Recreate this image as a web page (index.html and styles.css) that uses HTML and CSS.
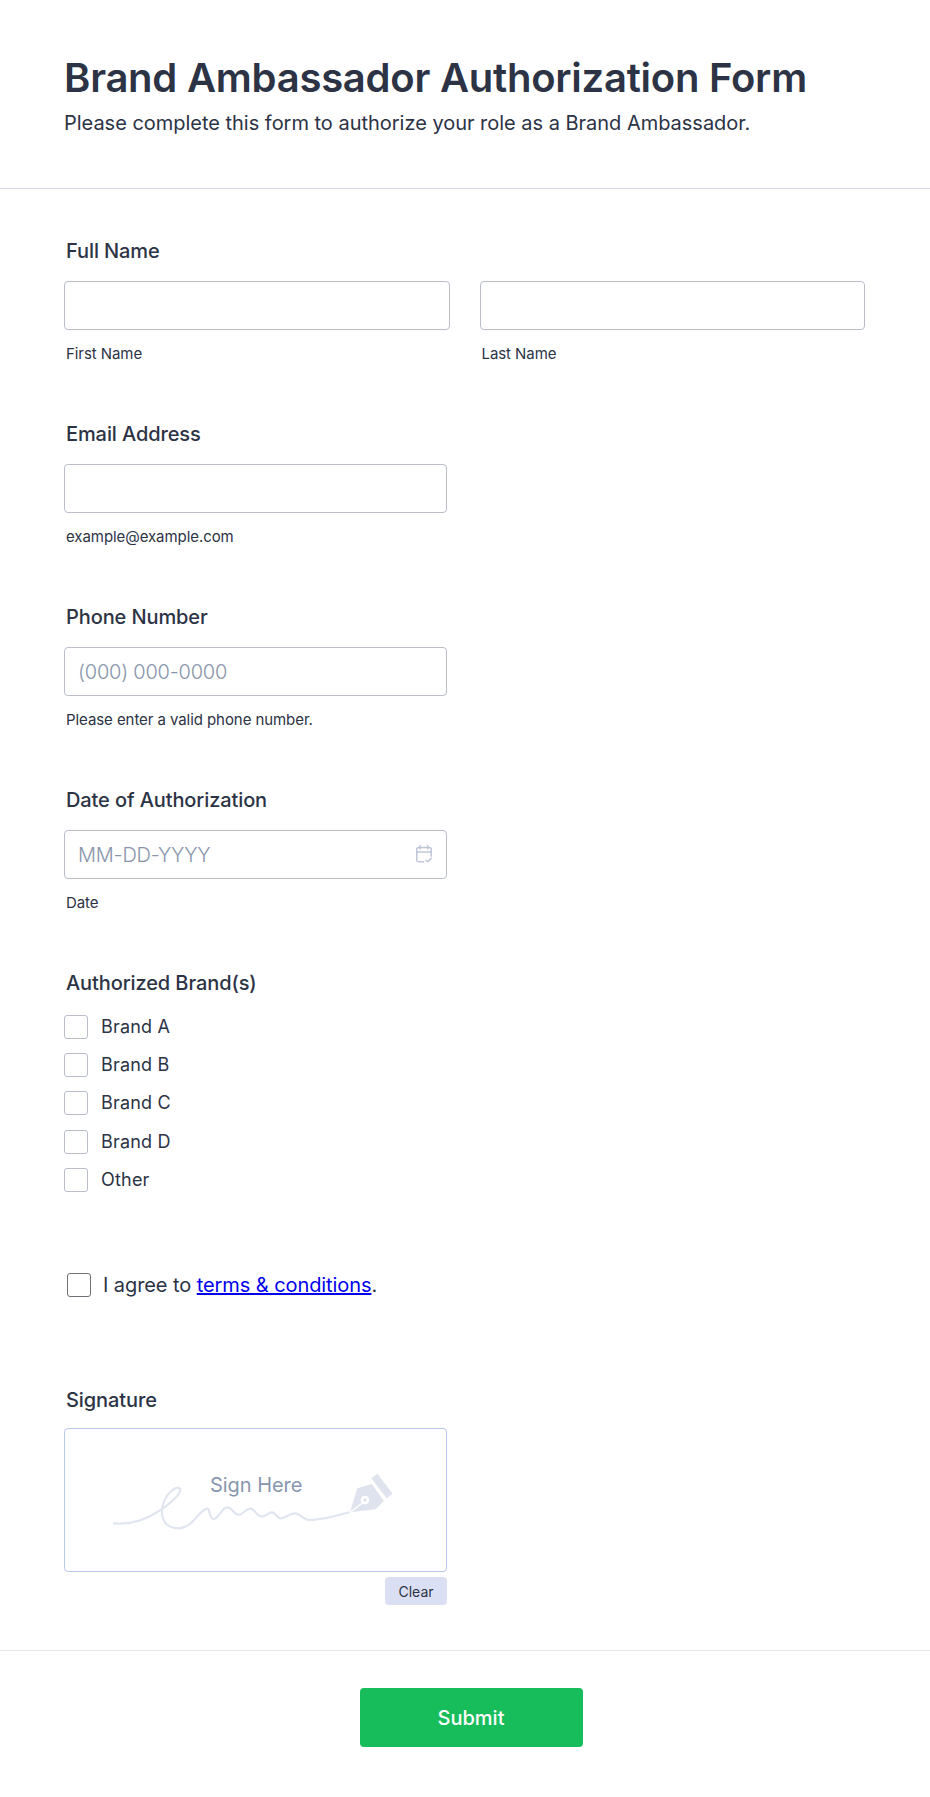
FILE: index.html
```html
<!DOCTYPE html>
<html lang="en">
<head>
<meta charset="utf-8">
<title>Brand Ambassador Authorization Form</title>
<link rel="stylesheet" href="styles.css">
</head>
<body>
<form class="form">
  <header class="form-header">
    <h1 class="title">Brand Ambassador Authorization Form</h1>
    <p class="subtitle">Please complete this form to authorize your role as a Brand Ambassador.</p>
  </header>
  <div class="form-body">
    <div class="field">
      <div class="label">Full Name</div>
      <div class="name-row">
        <div class="name-col">
          <input class="input input-wide" type="text" aria-label="First Name">
          <div class="sublabel">First Name</div>
        </div>
        <div class="name-col">
          <input class="input input-wide" type="text" aria-label="Last Name">
          <div class="sublabel">Last Name</div>
        </div>
      </div>
    </div>
    <div class="field">
      <div class="label">Email Address</div>
      <input class="input" type="text" aria-label="Email Address">
      <div class="sublabel">example@example.com</div>
    </div>
    <div class="field">
      <div class="label">Phone Number</div>
      <input class="input" type="text" placeholder="(000) 000-0000" aria-label="Phone Number">
      <div class="sublabel">Please enter a valid phone number.</div>
    </div>
    <div class="field">
      <div class="label">Date of Authorization</div>
      <div class="date-wrap">
        <input class="input" type="text" placeholder="MM-DD-YYYY" aria-label="Date">
        <svg class="cal-icon" viewBox="0 0 16 18" fill="none" stroke="#bfc6d6" stroke-width="1.5" stroke-linecap="round" stroke-linejoin="round">
          <path d="M7.5 16.8H2.6A1.8 1.8 0 0 1 .8 15V4.4A1.8 1.8 0 0 1 2.6 2.6h10.8a1.8 1.8 0 0 1 1.8 1.8v6.8"/>
          <path d="M.8 7h14.4M4.2.7v3.4M11.8.7v3.4"/>
          <path d="M10 15.2l1.7 1.6 3.4-3.4"/>
        </svg>
      </div>
      <div class="sublabel">Date</div>
    </div>
    <div class="field field-checks">
      <div class="label label-checks">Authorized Brand(s)</div>
      <label class="check-row"><span class="box"></span>Brand A</label>
      <label class="check-row"><span class="box"></span>Brand B</label>
      <label class="check-row"><span class="box"></span>Brand C</label>
      <label class="check-row"><span class="box"></span>Brand D</label>
      <label class="check-row"><span class="box"></span>Other</label>
    </div>
    <div class="terms">
      <span class="box box-dark"></span>
      <span>I agree to <a class="terms-link" href="#">terms &amp; conditions</a>.</span>
    </div>
    <div class="field field-signature">
      <div class="label label-signature">Signature</div>
      <div class="signature">
        <span class="sign-here">Sign Here</span>
        <svg class="sign-art" viewBox="0 0 930 300" fill="none">
          <path d="M42 220C95 226 145 205 185 178C220 152 245 128 240 116C232 104 196 128 187 172C181 210 200 236 238 235C280 232 300 176 322 176C332 176 325 208 342 207C358 205 365 172 382 172C398 172 400 196 418 194C432 192 438 174 452 176C465 178 470 200 486 200C498 200 505 187 516 187C527 187 530 205 542 205C556 205 570 190 585 190C600 190 610 210 628 210C665 210 710 197 746 187" stroke="#e0e5f0" stroke-width="6.5" stroke-linecap="round"/>
          <path d="M750 187L772 115L815 102L852 153L826 178Z" fill="#dfe3ee"/>
          <path d="M750 187L788 158" stroke="#fff" stroke-width="4"/>
          <circle cx="795" cy="150" r="13" fill="#fff"/>
          <circle cx="795" cy="150" r="5" fill="#dfe3ee"/>
          <path d="M823 78L869 138" stroke="#dfe3ee" stroke-width="23" stroke-linejoin="round"/>
        </svg>
      </div>
      <div class="clear-row"><button class="clear" type="button">Clear</button></div>
    </div>
  </div>
  <footer class="form-footer">
    <button class="submit" type="button">Submit</button>
  </footer>
</form>
</body>
</html>
```
FILE: styles.css
```css
* { box-sizing: border-box; }
html, body { margin: 0; padding: 0; background: #fff; }
body { font-family: Inter, "Liberation Sans", sans-serif; color: #2c3345; }
.form { width: 930px; height: 1797px; }
.form-header { height: 189px; padding: 52px 64px 0; border-bottom: 1px solid #d8dae9; }
.title { margin: 0; font-size: 40px; line-height: 52px; font-weight: 600; letter-spacing: -0.24px; color: #2c3345; }
.subtitle { margin: 5px 0 0; font-size: 20px; line-height: 28px; font-weight: 400; letter-spacing: -0.02px; }
.form-body { padding: 50px 64px 0; height: 1462px; border-bottom: 1px solid #e3e5ee; }
.field { height: 183px; }
.label { height: 24px; line-height: 24px; margin: 0 0 18px 2px; font-size: 20px; font-weight: 500; letter-spacing: -0.1px; }
.name-row { display: flex; gap: 30px; width: 801px; }
.name-col { width: 385.5px; }
.input { display: block; width: 383px; height: 49px; padding: 0 13px; border: 1px solid #b8bdc9; border-radius: 4px; background: #fff; font: 300 20px Inter, sans-serif; letter-spacing: -0.22px; color: #2c3345; outline: none; }
.input-wide { width: 385.5px; }
.input::placeholder { color: #8894ab; opacity: 1; }
.sublabel { margin: 14px 0 0 2px; height: 20px; line-height: 20px; font-size: 15px; font-weight: 400; letter-spacing: -0.07px; }
.date-wrap { position: relative; width: 383px; }
.cal-icon { position: absolute; left: 352px; top: 15px; width: 16px; height: 18px; }
.field-checks { height: 302px; }
.label-checks { margin-bottom: 20px; }
.check-row { display: flex; align-items: center; gap: 13px; height: 24px; margin-bottom: 14.2px; font-size: 18px; font-weight: 400; line-height: 24px; letter-spacing: 0.2px; }
.box { flex: none; width: 24px; height: 24px; border: 1px solid #b8bdc9; border-radius: 3px; background: #fff; }
.box-dark { border-color: #6f7076; }
.terms { display: flex; align-items: center; gap: 12px; height: 24px; margin-left: 3px; font-size: 20px; font-weight: 400; line-height: 24px; letter-spacing: -0.08px; }
.terms-link { color: #0000ee; text-decoration: underline; }
.field-signature { margin-top: 91px; height: auto; }
.label-signature { margin-bottom: 16px; }
.signature { position: relative; width: 383px; height: 144px; border: 1px solid #b8c7ea; border-radius: 4px; background: #fff; }
.sign-here { position: absolute; left: 145px; top: 44px; font-size: 20px; line-height: 24px; letter-spacing: -0.05px; color: #8896b0; }
.sign-art { position: absolute; left: 35px; top: 21px; width: 310px; height: 100px; }
.clear-row { display: flex; justify-content: flex-end; width: 383px; margin-top: 5px; }
.clear { width: 62px; height: 28px; padding: 0; border: 0; border-radius: 4px; background: #dbdff3; font: 400 14px Inter, sans-serif; color: #2c3345; }
.form-footer { display: flex; justify-content: center; padding-top: 37px; }
.submit { width: 223px; height: 59px; margin-left: 12px; border: 0; border-radius: 4px; background: #18bd5b; color: #fff; font: 500 20px Inter, sans-serif; }
```
